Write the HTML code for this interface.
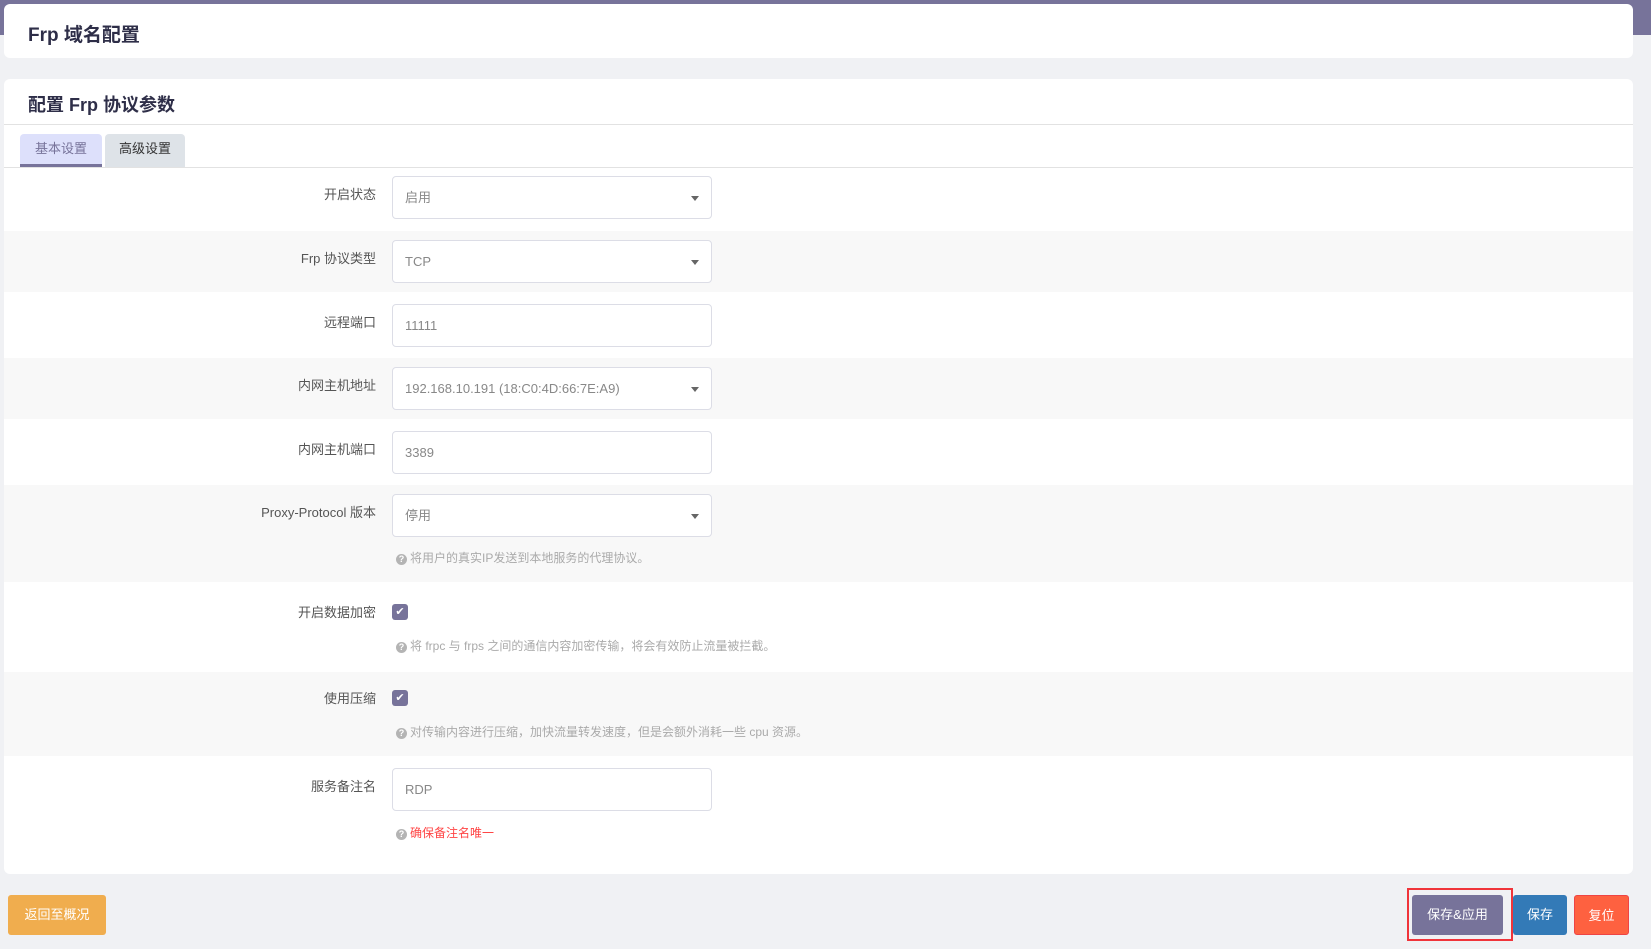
<!DOCTYPE html>
<html><head><meta charset="utf-8"><style>
*{box-sizing:border-box;margin:0;padding:0}
body{width:1651px;height:949px;background:#f0f1f4;font-family:"Liberation Sans","Noto Sans CJK SC",sans-serif;position:relative;overflow:hidden;color:#555}
.hdr{position:absolute;left:0;top:0;width:1651px;height:35px;background:#77739a}
.card{position:absolute;left:4px;width:1629px;background:#fff;border-radius:6px}
.t{position:absolute;left:24px;font-weight:bold;color:#2e2e48;font-size:19px}
.tab{position:absolute;top:134px;height:33px;font-size:13px;line-height:30px;text-align:center;border-radius:4px 4px 0 0}
.row{position:absolute;left:0;width:1629px}
.g{background:#f8f8f8}
.lbl{position:absolute;right:1257px;font-size:13px;color:#555;white-space:nowrap}
.in{position:absolute;left:388px;width:320px;height:43px;border:1px solid #dcdde6;border-radius:4px;background:#fff;font-size:13px;color:#888;padding-left:12px;line-height:41px}
.in.s:after{content:"";position:absolute;right:12px;top:19px;border:4px solid transparent;border-top:5px solid #666}
.help{position:absolute;left:392px;font-size:12px;color:#aaa;white-space:nowrap}
.help i{display:inline-block;width:11px;height:11px;border-radius:50%;background:#b4b4b4;color:#fff;font-style:normal;font-size:9px;line-height:11px;text-align:center;margin-right:3px;font-weight:bold;vertical-align:0px}
.cb{position:absolute;left:388px;width:16px;height:16px;border-radius:3px;background:#77739a;color:#fff;font-size:11px;text-align:center;line-height:16px}
.btn{position:absolute;top:895px;height:40px;border-radius:3px;color:#fff;font-size:13px;line-height:40px;text-align:center}
</style></head><body>
<div class="hdr"></div>
<div class="card" style="top:4px;height:54px"><div class="t" style="top:16px">Frp 域名配置</div></div>
<div class="card" style="top:79px;height:795px">
<div class="t" style="top:12px;font-size:18px">配置 Frp 协议参数</div>
<div style="position:absolute;left:0;top:45px;width:100%;border-top:1px solid #e2e2e2"></div>
<div class="tab" style="left:16px;width:82px;top:55px;background:#dde0fb;color:#77739a;border-bottom:3px solid #77739a">基本设置</div>
<div class="tab" style="left:101px;width:80px;top:55px;background:#dee3e8;color:#333">高级设置</div>
<div style="position:absolute;left:0;top:88px;width:100%;border-top:1px solid #e2e2e2"></div>

<div class="row" style="top:88px;height:64px"><div class="lbl" style="top:17px">开启状态</div><div class="in s" style="top:9px">启用</div></div>
<div class="row g" style="top:152px;height:61px"><div class="lbl" style="top:17px">Frp 协议类型</div><div class="in s" style="top:9px">TCP</div></div>
<div class="row" style="top:213px;height:66px"><div class="lbl" style="top:20px">远程端口</div><div class="in" style="top:12px">11111</div></div>
<div class="row g" style="top:279px;height:61px"><div class="lbl" style="top:17px">内网主机地址</div><div class="in s" style="top:9px">192.168.10.191 (18:C0:4D:66:7E:A9)</div></div>
<div class="row" style="top:340px;height:66px"><div class="lbl" style="top:20px">内网主机端口</div><div class="in" style="top:12px">3389</div></div>
<div class="row g" style="top:406px;height:97px"><div class="lbl" style="top:17px">Proxy-Protocol 版本</div><div class="in s" style="top:9px">停用</div><div class="help" style="top:64px"><i>?</i>将用户的真实IP发送到本地服务的代理协议。</div></div>
<div class="row" style="top:503px;height:90px"><div class="lbl" style="top:20px">开启数据加密</div><div class="cb" style="top:22px">✔</div><div class="help" style="top:55px"><i>?</i>将 frpc 与 frps 之间的通信内容加密传输，将会有效防止流量被拦截。</div></div>
<div class="row g" style="top:593px;height:84px"><div class="lbl" style="top:16px">使用压缩</div><div class="cb" style="top:18px">✔</div><div class="help" style="top:51px"><i>?</i>对传输内容进行压缩，加快流量转发速度，但是会额外消耗一些 cpu 资源。</div></div>
<div class="row" style="top:677px;height:118px"><div class="lbl" style="top:20px">服务备注名</div><div class="in" style="top:12px">RDP</div><div class="help" style="top:68px;color:#f44"><i>?</i>确保备注名唯一</div></div>
</div>
<div class="btn" style="left:8px;width:98px;background:#f0ad4e">返回至概况</div>
<div style="position:absolute;left:1407px;top:888px;width:106px;height:53px;border:2px solid #f0343a"></div>
<div class="btn" style="left:1412px;width:91px;background:#77739a">保存&amp;应用</div>
<div class="btn" style="left:1513px;width:54px;background:#337ab7">保存</div>
<div class="btn" style="left:1574px;width:55px;background:#fe6140;border:1px solid #e44">复位</div>
</body></html>
